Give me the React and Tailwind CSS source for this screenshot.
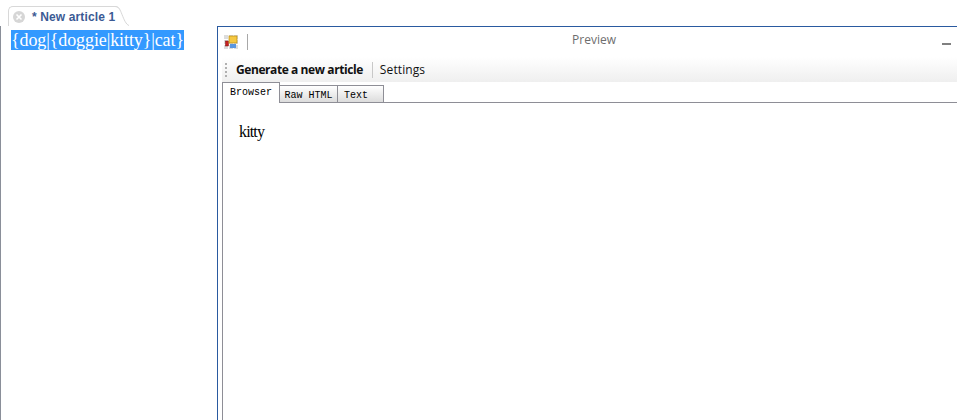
export default function App() {
  return (
    <div className="relative flex h-[420px] w-[957px] flex-col overflow-hidden bg-white">
      <div className="flex h-[26px] items-end pl-2">
        <div className="flex h-[20px] w-[112px] items-center gap-[7px] rounded-tl-[5px] rounded-tr-[5px] border-l border-t border-[#d8d8d8] pl-1">
          <div className="flex h-[12px] w-[12px] items-center justify-center rounded-full bg-[#d6d6d6]">
            <svg width="8" height="8" viewBox="0 0 8 8"><path d="M1.5 1.5l5 5M6.5 1.5l-5 5" stroke="#fff" strokeWidth="1.6" /></svg>
          </div>
          <span className="font-['Liberation_Sans',sans-serif] text-[12px] font-bold tracking-[0.12px] whitespace-nowrap text-[#3b5a94]">* New article 1</span>
        </div>
        <svg width="14" height="20" viewBox="0 0 14 20" className="-ml-[5px]"><path d="M0 .5c4 0 5 3 7 8s4 10 7 11" fill="none" stroke="#d8d8d8" /></svg>
      </div>
      <div className="flex min-h-0 flex-1">
        <div className="w-[217px] shrink-0 border-l border-[#8a8f99] pl-[10px] pt-[4px]">
          <span className="block h-[20px] w-[173px] bg-[#3399ff] font-['Liberation_Serif',serif] text-[18px] leading-[20px] tracking-[-0.1px] whitespace-nowrap text-white">{"{dog|{doggie|kitty}|cat}"}</span>
        </div>
        <div className="flex min-w-0 flex-1 flex-col border-l border-t border-[#2a5aa0] pl-1">
          <div className="flex h-[30px] shrink-0 items-center pl-[2px] pr-[6px]">
            <svg width="14" height="14" viewBox="0 0 14 14" className="shrink-0">
              <rect x="0" y="0" width="14" height="14" fill="#dcdcdc" />
              <path d="M0 4.5h14M0 9.5h14M4.5 0v14M9.5 0v14" stroke="#fff" strokeWidth="1" />
              <rect x="1.5" y="6" width="3" height="5" fill="#c62020" stroke="#7a1010" strokeWidth="0.5" />
              <rect x="5" y="1" width="8" height="7" fill="#f5c842" stroke="#b88a10" strokeWidth="0.7" />
              <rect x="6" y="9" width="6" height="4" fill="#5a96e0" />
            </svg>
            <div className="ml-[9px] h-[16px] w-px bg-[#a8a8a8]" />
            <div className="flex-1 pb-[4px] pr-[2px] text-center font-['Open_Sans',sans-serif] text-[12px] text-[#6e6e6e]">Preview</div>
            <div className="mt-[4px] h-[2px] w-[9px] bg-[#808080]" />
          </div>
          <div className="flex h-[25px] shrink-0 items-center bg-gradient-to-b from-white to-[#efefef] pl-[3px] font-['Open_Sans',sans-serif] text-[12px] text-[#111]">
            <div className="h-[14px] w-[2px] bg-[repeating-linear-gradient(to_bottom,#b0b0b0_0,#b0b0b0_2px,transparent_2px,transparent_4px)]" />
            <span className="ml-[9px] font-bold tracking-[-0.42px]">Generate a new article</span>
            <div className="ml-[9px] h-[16px] w-px bg-[#c8c8c8]" />
            <span className="ml-[7px] tracking-[0.1px]">Settings</span>
          </div>
          <div className="flex min-h-0 flex-1 flex-col border-l border-[#8e8e96] font-['Liberation_Mono',monospace] text-[10px] text-black">
            <div className="flex h-[21px] shrink-0 items-end">
              <div className="-ml-px flex h-[21px] w-[58px] items-center justify-center border-l border-r border-t border-[#8e8e96] bg-white pb-[1px]">Browser</div>
              <div className="flex h-[18px] flex-1 items-end">
                <div className="flex h-[18px] w-[58px] items-center justify-center border-b border-r border-t border-[#8e8e96] bg-gradient-to-b from-white to-[#dcdcdc] pt-[2px]">Raw HTML</div>
                <div className="flex h-[18px] w-[46px] items-center justify-start border-b border-r border-t border-[#8e8e96] bg-gradient-to-b from-white to-[#dcdcdc] pl-[6px] pt-[2px]">Text</div>
                <div className="h-[18px] flex-1 border-b border-[#8e8e96]" />
              </div>
            </div>
            <div className="flex-1 pl-[16px] pt-[19px] font-['Liberation_Serif',serif] text-[16px] leading-[20px] tracking-[-0.85px] text-black">kitty</div>
          </div>
        </div>
      </div>
    </div>
  );
}
